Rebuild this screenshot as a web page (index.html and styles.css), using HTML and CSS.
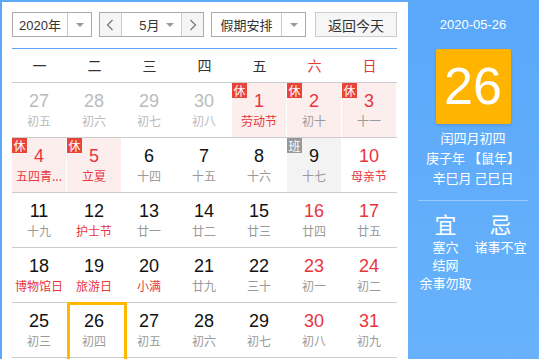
FILE: index.html
```html
<!DOCTYPE html>
<html lang="zh">
<head>
<meta charset="utf-8">
<link rel="stylesheet" href="styles.css">
</head>
<body>
<div class="cal">
  <div class="main">
    <div class="toolbar">
      <div class="sel year"><span class="sel-text">2020年</span><span class="sel-arrow"><i class="tri"></i></span></div>
      <div class="sel month">
        <span class="nav"><svg width="8" height="12" viewBox="0 0 8 12"><path d="M6.5 1 L1.5 6 L6.5 11" fill="none" stroke="#777" stroke-width="1.2"/></svg></span>
        <span class="sel-text m">5月</span><span class="arr-in"><i class="tri"></i></span>
        <span class="nav"><svg width="8" height="12" viewBox="0 0 8 12"><path d="M1.5 1 L6.5 6 L1.5 11" fill="none" stroke="#777" stroke-width="1.2"/></svg></span>
      </div>
      <div class="sel hol"><span class="sel-text">假期安排</span><span class="sel-arrow"><i class="tri"></i></span></div>
      <div class="btn">返回今天</div>
    </div>
    <div class="week">
      <span>一</span><span>二</span><span>三</span><span>四</span><span>五</span><span class="red">六</span><span class="red">日</span>
    </div>
    <div class="row">
      <div class="cell other"><b>27</b><em>初五</em></div>
      <div class="cell other"><b>28</b><em>初六</em></div>
      <div class="cell other"><b>29</b><em>初七</em></div>
      <div class="cell other"><b>30</b><em>初八</em></div>
      <div class="cell rest"><i class="tag">休</i><b class="r">1</b><em class="r">劳动节</em></div>
      <div class="cell rest"><i class="tag">休</i><b class="r">2</b><em>初十</em></div>
      <div class="cell rest"><i class="tag">休</i><b class="r">3</b><em>十一</em></div>
    </div>
    <div class="row">
      <div class="cell rest"><i class="tag">休</i><b class="r">4</b><em class="r">五四青...</em></div>
      <div class="cell rest"><i class="tag">休</i><b class="r">5</b><em class="r">立夏</em></div>
      <div class="cell"><b>6</b><em>十四</em></div>
      <div class="cell"><b>7</b><em>十五</em></div>
      <div class="cell"><b>8</b><em>十六</em></div>
      <div class="cell work"><i class="tag gray">班</i><b>9</b><em>十七</em></div>
      <div class="cell"><b class="r">10</b><em class="r">母亲节</em></div>
    </div>
    <div class="row">
      <div class="cell"><b>11</b><em>十九</em></div>
      <div class="cell"><b>12</b><em class="r">护士节</em></div>
      <div class="cell"><b>13</b><em>廿一</em></div>
      <div class="cell"><b>14</b><em>廿二</em></div>
      <div class="cell"><b>15</b><em>廿三</em></div>
      <div class="cell"><b class="r">16</b><em>廿四</em></div>
      <div class="cell"><b class="r">17</b><em>廿五</em></div>
    </div>
    <div class="row">
      <div class="cell"><b>18</b><em class="r">博物馆日</em></div>
      <div class="cell"><b>19</b><em class="r">旅游日</em></div>
      <div class="cell"><b>20</b><em class="r">小满</em></div>
      <div class="cell"><b>21</b><em>廿九</em></div>
      <div class="cell"><b>22</b><em>三十</em></div>
      <div class="cell"><b class="r">23</b><em>初一</em></div>
      <div class="cell"><b class="r">24</b><em>初二</em></div>
    </div>
    <div class="row">
      <div class="cell"><b>25</b><em>初三</em></div>
      <div class="cell today"><b>26</b><em>初四</em></div>
      <div class="cell"><b>27</b><em>初五</em></div>
      <div class="cell"><b>28</b><em>初六</em></div>
      <div class="cell"><b>29</b><em>初七</em></div>
      <div class="cell"><b class="r">30</b><em>初八</em></div>
      <div class="cell"><b class="r">31</b><em>初九</em></div>
    </div>
  </div>
  <div class="side">
    <div class="side-date">2020-05-26</div>
    <div class="big">26</div>
    <div class="lunar">
      <div>闰四月初四</div>
      <div>庚子年 【鼠年】</div>
      <div>辛巳月 己巳日</div>
    </div>
    <div class="yiji">
      <div class="col">
        <div class="head">宜</div>
        <div class="item">塞穴</div>
        <div class="item">结网</div>
        <div class="item">余事勿取</div>
      </div>
      <div class="col">
        <div class="head">忌</div>
        <div class="item">诸事不宜</div>
      </div>
    </div>
  </div>
</div>
</body>
</html>
```

FILE: styles.css
```css
* { box-sizing: border-box; }
html, body { margin: 0; padding: 0; background: #fff; }
body {
  font-family: "Liberation Sans", "Noto Sans CJK SC", sans-serif;
  color: #222;
  overflow: hidden;
}
.cal {
  display: flex;
  width: 560px;
  height: 359px;
  overflow: hidden;
  border-top: 2px solid #5ea8f8;
  border-left: 2px solid #5ea8f8;
}
.main {
  width: 406px;
  padding: 10px 11px 0 10px;
}
.toolbar {
  display: flex;
  height: 25px;
  font-size: 13px;
  color: #333;
}
.sel {
  display: flex;
  border: 1px solid #aaa;
  background: #fff;
  height: 25px;
}
.sel-text {
  display: flex;
  align-items: center;
  justify-content: center;
  border-right: 1px solid #ccc;
}
.sel-arrow, .arr-in {
  display: flex;
  align-items: center;
  justify-content: center;
}
.tri {
  display: block;
  width: 0; height: 0;
  border-left: 4px solid transparent;
  border-right: 4px solid transparent;
  border-top: 4px solid #999;
}
.year { width: 80px; }
.year .sel-text { width: 55px; }
.year .sel-arrow { flex: 1; }
.month { width: 105px; margin-left: 7px; }
.nav {
  width: 22px;
  display: flex;
  align-items: center;
  justify-content: center;
  background: #f5f5f5;
}
.nav:first-child { border-right: 1px solid #ccc; }
.nav:last-child { border-left: 1px solid #ccc; }
.month .sel-text.m { width: 38px; border-right: none; justify-content: flex-end; }
.arr-in { width: 22px; }
.hol { width: 95px; margin-left: 7px; }
.hol .sel-text { width: 70px; }
.hol .sel-arrow { flex: 1; }
.btn {
  width: 82px;
  margin-left: 9px;
  border: 1px solid #ccc;
  background: #f6f6f6;
  display: flex;
  align-items: center;
  justify-content: center;
  font-size: 14px;
}
.week {
  margin-top: 11px;
  border-top: 1px solid #5ea8f8;
  border-bottom: 1px solid #ccc;
  display: flex;
  height: 35px;
  font-family: "Noto Sans CJK SC", sans-serif;
  font-size: 14px;
}
.week span {
  width: 55px;
  text-align: center;
  line-height: 33px;
  color: #333;
}
.week .red { color: #e8353e; }
.row {
  display: flex;
  border-bottom: 1px solid #ccc;
  height: 55px;
}
.cell {
  position: relative;
  width: 55px;
  height: 54px;
  border-right: 1px solid transparent;
  background-clip: padding-box;
  text-align: center;
  padding: 6px 2px 0 2px;
}
.cell b {
  display: block;
  font-weight: normal;
  font-size: 18px;
  line-height: 24px;
  color: #111;
}
.cell em {
  display: block;
  font-style: normal;
  font-family: "Noto Sans CJK SC", sans-serif;
  font-size: 12px;
  line-height: 15px;
  color: #9a9a9a;
  white-space: nowrap;
}
.cell .r { color: #e8353e; }
.cell.other b, .cell.other em { color: #bbb; }
.rest { background-color: #fdeeee; }
.work { background-color: #f3f3f3; }
.tag {
  position: absolute;
  left: 0; top: 0;
  width: 15px; height: 15px;
  background: #e8453a;
  color: #fff;
  font-style: normal;
  font-family: "Noto Sans CJK SC", sans-serif;
  font-size: 12px;
  line-height: 15px;
  text-align: center;
}
.tag.gray { background: #999; }
.today::after {
  content: "";
  position: absolute;
  left: 0; top: -1px;
  width: 54px; height: 56px;
  border: 3px solid #ffb700;
}
.side {
  width: 131px;
  flex: none;
  background: linear-gradient(#5aa8fa, #68b2fc);
  color: #fff;
  padding: 0 11px 0 10px;
  text-align: center;
  font-family: "Noto Sans CJK SC", sans-serif;
}
.side-date {
  font-family: "Liberation Sans", sans-serif;
  font-size: 13px;
  line-height: 16px;
  margin-top: 15px;
}
.big {
  width: 75px;
  height: 75px;
  margin: 16px auto 0;
  background: #ffb400;
  border-radius: 2px;
  box-shadow: 0 1px 3px rgba(0,0,0,0.15);
  font-family: "Liberation Sans", sans-serif;
  font-size: 52px;
  line-height: 75px;
}
.lunar {
  margin-top: 4px;
  font-size: 13px;
  line-height: 20px;
}
.yiji {
  margin-top: 12px;
  border-top: 1px solid rgba(255,255,255,0.35);
  display: flex;
  padding-top: 7px;
}
.col { width: 55px; }
.head { font-size: 22px; line-height: 30px; }
.item { font-size: 13px; line-height: 18px; }
```
